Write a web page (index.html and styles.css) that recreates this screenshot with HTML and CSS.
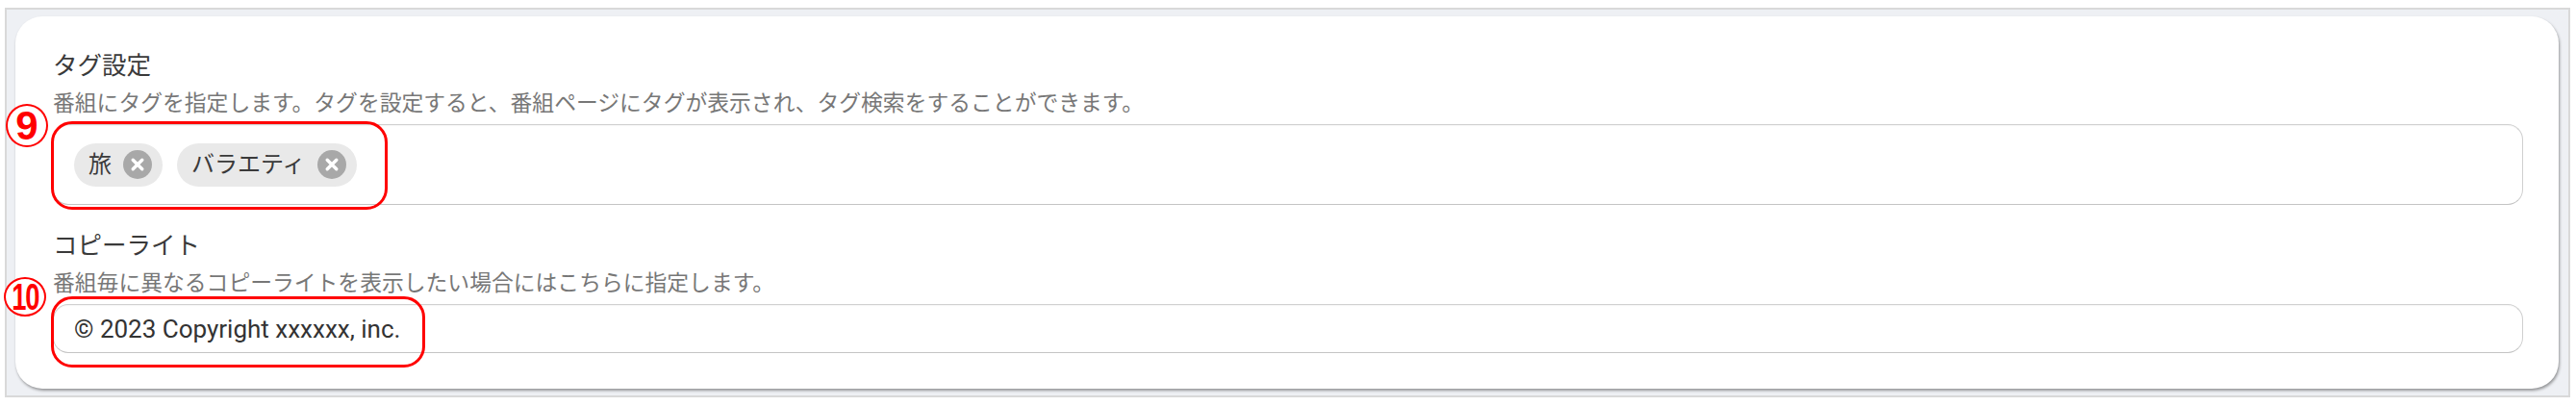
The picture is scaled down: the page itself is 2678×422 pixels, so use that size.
FILE: index.html
```html
<!DOCTYPE html>
<html lang="ja">
<head>
<meta charset="utf-8">
<title>タグ設定</title>
<link rel="stylesheet" href="styles.css">
</head>
<body>
<div class="frame">
  <div class="card">
    <section class="field">
      <h2 class="field-title">タグ設定</h2>
      <p class="field-desc">番組にタグを指定します。タグを設定すると、番組ページにタグが表示され、タグ検索をすることができます。</p>
      <div class="input input-tags">
        <span class="chip"><span class="chip-label">旅</span><svg class="chip-remove" viewBox="0 0 30 30" width="30" height="30"><circle cx="15" cy="15" r="15" fill="#a8a8a8"/><path d="M10.2 10.2 L19.8 19.8 M19.8 10.2 L10.2 19.8" stroke="#fff" stroke-width="3.4" stroke-linecap="round"/></svg></span>
        <span class="chip"><span class="chip-label">バラエティ</span><svg class="chip-remove" viewBox="0 0 30 30" width="30" height="30"><circle cx="15" cy="15" r="15" fill="#a8a8a8"/><path d="M10.2 10.2 L19.8 19.8 M19.8 10.2 L10.2 19.8" stroke="#fff" stroke-width="3.4" stroke-linecap="round"/></svg></span>
      </div>
    </section>
    <section class="field">
      <h2 class="field-title">コピーライト</h2>
      <p class="field-desc">番組毎に異なるコピーライトを表示したい場合にはこちらに指定します。</p>
      <div class="input input-text">© 2023 Copyright xxxxxx, inc.</div>
    </section>
  </div>
</div>
<div class="annot-box annot-box-9"></div>
<div class="annot-box annot-box-10"></div>
<div class="annot-num annot-num-9">9</div>
<div class="annot-num annot-num-10"><span>10</span></div>
</body>
</html>
```
FILE: styles.css
```css
html, body {
  margin: 0;
  padding: 0;
  background: #ffffff;
}
body {
  position: relative;
  width: 2678px;
  height: 422px;
  overflow: hidden;
  font-family: Roboto, "Noto Sans CJK JP", sans-serif;
}
.frame {
  margin: 8px 6px 0 5px;
  border: 2px solid #d9d9d9;
  background: #eef0f4;
  padding: 7px 10px 7px 9px;
}
.card {
  background: #ffffff;
  border-radius: 28px;
  box-shadow: 1px 2px 3px rgba(0, 0, 0, 0.38);
  padding: 34px 37px 37px 39px;
  display: flex;
  flex-direction: column;
  gap: 25px;
}
.field {
  display: flex;
  flex-direction: column;
}
.field-title {
  margin: 0 0 8px;
  font-weight: 400;
  font-size: 25.5px;
  line-height: 34px;
  color: #3a3a3a;
}
.field-desc {
  margin: 0 0 6px;
  font-size: 22.8px;
  line-height: 30px;
  color: #777777;
  white-space: nowrap;
}
.input {
  box-sizing: border-box;
  border: 1px solid #d0d0d0;
  border-bottom-color: #c4c4c4;
  border-radius: 16px;
  box-shadow: inset 0 1px 1px rgba(0, 0, 0, 0.04);
  background: #ffffff;
}
.input-tags {
  height: 84px;
  display: flex;
  align-items: center;
  gap: 15px;
  padding: 0 21px;
}
.chip {
  display: inline-flex;
  align-items: center;
  height: 45px;
  box-sizing: border-box;
  padding: 0 11px 0 15px;
  gap: 12px;
  border-radius: 23px;
  background: #e9e9e9;
}
.chip-label {
  font-size: 24px;
  line-height: 30px;
  color: #3a3a3a;
}
.chip-remove {
  display: block;
  flex: none;
}
.input-text {
  height: 51px;
  display: flex;
  align-items: center;
  padding: 0 21px;
  font-size: 26px;
  color: #333333;
}
.annot-box {
  position: absolute;
  box-sizing: border-box;
  border: 3px solid #ff0000;
  border-radius: 22px;
}
.annot-box-9 {
  left: 53px;
  top: 126px;
  width: 350px;
  height: 92px;
}
.annot-box-10 {
  left: 53px;
  top: 308px;
  width: 389px;
  height: 74px;
}
.annot-num {
  position: absolute;
  box-sizing: border-box;
  border: 2px solid #ff0000;
  border-radius: 50%;
  color: #ff0000;
  font-family: "Liberation Sans", Arial, sans-serif;
  font-weight: 700;
  display: flex;
  align-items: center;
  justify-content: center;
  background: #ffffff;
}
.annot-num-9 {
  left: 6px;
  top: 108px;
  width: 44px;
  height: 45px;
  font-size: 42px;
  line-height: 1;
}
.annot-num-10 {
  left: 4px;
  top: 288px;
  width: 44px;
  height: 41px;
  font-size: 38px;
  line-height: 1;
}
.annot-num-10 span {
  display: inline-block;
  letter-spacing: -2px;
  transform: scaleX(0.72);
}
```
